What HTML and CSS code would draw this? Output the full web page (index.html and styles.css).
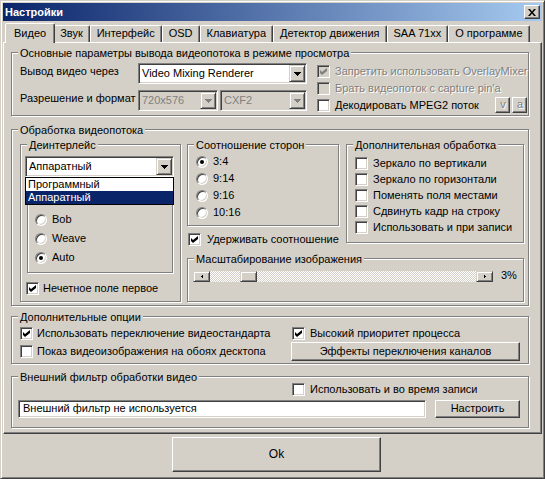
FILE: index.html
```html
<!DOCTYPE html>
<html>
<head>
<meta charset="utf-8">
<title>Настройки</title>
<link rel="stylesheet" href="styles.css">
</head>
<body>
<div class="window">
  <div class="titlebar">
    <span class="title">Настройки</span>
    <span class="close"><svg width="8" height="7" viewBox="0 0 8 7"><path d="M0 0h2l2 2.5L6 0h2L5 3.5 8 7H6L4 4.5 2 7H0l3-3.5z" fill="#000"/></svg></span>
  </div>
  <div class="tabs">
    <div class="tab active">Видео</div>
    <div class="tab">Звук</div>
    <div class="tab">Интерфейс</div>
    <div class="tab">OSD</div>
    <div class="tab">Клавиатура</div>
    <div class="tab">Детектор движения</div>
    <div class="tab">SAA 71xx</div>
    <div class="tab">О программе</div>
  </div>
  <div class="panel">
    <div class="group g1">
      <div class="legend">Основные параметры вывода видеопотока в режиме просмотра</div>
      <div class="g1-body">
        <div class="g1-left">
          <div class="frow">
            <span class="flabel">Вывод видео через</span>
            <div class="combo c-vmr"><span class="ctext">Video Mixing Renderer</span><span class="dd"><svg width="7" height="4" viewBox="0 0 7 4"><path d="M0 0h7v1h-1v1h-1v1h-1v1h-1v-1h-1v-1h-1v-1h-1z" fill="#000"/></svg></span></div>
          </div>
          <div class="frow">
            <span class="flabel">Разрешение и формат</span>
            <div class="combo disabled c-res"><span class="ctext">720x576</span><span class="dd"><svg width="7" height="4" viewBox="0 0 7 4"><path d="M0 0h7v1h-1v1h-1v1h-1v1h-1v-1h-1v-1h-1v-1h-1z" fill="#808080"/></svg></span></div>
            <div class="combo disabled c-fmt"><span class="ctext">CXF2</span><span class="dd"><svg width="7" height="4" viewBox="0 0 7 4"><path d="M0 0h7v1h-1v1h-1v1h-1v1h-1v-1h-1v-1h-1v-1h-1z" fill="#808080"/></svg></span></div>
          </div>
        </div>
        <div class="g1-right">
          <div class="check disabled r17"><span class="box"><svg width="7" height="7" viewBox="0 0 7 7"><path d="M0 2l2 2 5-4v3l-5 4-2-2z" fill="#808080"/></svg></span><span class="clabel">Запретить использовать OverlayMixer</span></div>
          <div class="check disabled r17"><span class="box"></span><span class="clabel">Брать видеопоток с capture pin'a</span></div>
          <div class="check r17"><span class="box"></span><span class="clabel">Декодировать MPEG2 поток</span><span class="spacer"></span><span class="mini">v</span><span class="mini">a</span></div>
        </div>
      </div>
    </div>

    <div class="group g2">
      <div class="legend">Обработка видеопотока</div>
      <div class="g2-body">
        <div class="group deint">
          <div class="legend">Деинтерлейс</div>
          <div class="deint-body">
            <div class="combo c-deint"><span class="ctext">Аппаратный</span><span class="dd"><svg width="7" height="4" viewBox="0 0 7 4"><path d="M0 0h7v1h-1v1h-1v1h-1v1h-1v-1h-1v-1h-1v-1h-1z" fill="#000"/></svg></span></div>
            <div class="group radiobox">
              <div class="radio r19"><span class="rb"></span><span class="rlabel">Bob</span></div>
              <div class="radio r19"><span class="rb"></span><span class="rlabel">Weave</span></div>
              <div class="radio r19"><span class="rb on"></span><span class="rlabel">Auto</span></div>
            </div>
            <div class="check r17 odd"><span class="box"><svg width="7" height="7" viewBox="0 0 7 7"><path d="M0 2l2 2 5-4v3l-5 4-2-2z" fill="#000"/></svg></span><span class="clabel">Нечетное поле первое</span></div>
            <div class="dropdown">
              <div class="opt">Программный</div>
              <div class="opt sel">Аппаратный</div>
            </div>
          </div>
        </div>
        <div class="g2-right">
          <div class="g2-top">
            <div class="aspect-col">
              <div class="group aspect">
                <div class="legend">Соотношение сторон</div>
                <div class="aspect-body">
                  <div class="radio r17"><span class="rb on"></span><span class="rlabel">3:4</span></div>
                  <div class="radio r17"><span class="rb"></span><span class="rlabel">9:14</span></div>
                  <div class="radio r17"><span class="rb"></span><span class="rlabel">9:16</span></div>
                  <div class="radio r17"><span class="rb"></span><span class="rlabel">10:16</span></div>
                </div>
              </div>
              <div class="check r17 keep"><span class="box"><svg width="7" height="7" viewBox="0 0 7 7"><path d="M0 2l2 2 5-4v3l-5 4-2-2z" fill="#000"/></svg></span><span class="clabel">Удерживать соотношение</span></div>
            </div>
            <div class="group extra">
              <div class="legend">Дополнительная обработка</div>
              <div class="extra-body">
                <div class="check r15"><span class="box"></span><span class="clabel">Зеркало по вертикали</span></div>
                <div class="check r15"><span class="box"></span><span class="clabel">Зеркало по горизонтали</span></div>
                <div class="check r15"><span class="box"></span><span class="clabel">Поменять поля местами</span></div>
                <div class="check r15"><span class="box"></span><span class="clabel">Сдвинуть кадр на строку</span></div>
                <div class="check r15"><span class="box"></span><span class="clabel">Использовать и при записи</span></div>
              </div>
            </div>
          </div>
          <div class="group scale">
            <div class="legend">Масштабирование изображения</div>
            <div class="scale-body">
              <div class="scrollbar">
                <span class="sbtn"><svg width="2" height="3" viewBox="0 0 2 3"><path d="M2 0v3H1V2H0V1h1V0z" fill="#000"/></svg></span>
                <span class="track"><span class="thumb"></span></span>
                <span class="sbtn"><svg width="2" height="3" viewBox="0 0 2 3"><path d="M0 0v3h1V2h1V1H1V0z" fill="#000"/></svg></span>
              </div>
              <span class="pct">3%</span>
            </div>
          </div>
        </div>
      </div>
    </div>

    <div class="group g3">
      <div class="legend">Дополнительные опции</div>
      <div class="g3-body">
        <div class="g3-left">
          <div class="check r17"><span class="box"><svg width="7" height="7" viewBox="0 0 7 7"><path d="M0 2l2 2 5-4v3l-5 4-2-2z" fill="#000"/></svg></span><span class="clabel">Использовать переключение видеостандарта</span></div>
          <div class="check r17"><span class="box"></span><span class="clabel">Показ видеоизображения на обоях десктопа</span></div>
        </div>
        <div class="g3-right">
          <div class="check r17 shift"><span class="box"><svg width="7" height="7" viewBox="0 0 7 7"><path d="M0 2l2 2 5-4v3l-5 4-2-2z" fill="#000"/></svg></span><span class="clabel">Высокий приоритет процесса</span></div>
          <div class="btn effects">Эффекты переключения каналов</div>
        </div>
      </div>
    </div>

    <div class="group g4">
      <div class="legend">Внешний фильтр обработки видео</div>
      <div class="check r15 g4-check"><span class="box"></span><span class="clabel">Использовать и во время записи</span></div>
      <div class="g4-row">
        <div class="field">Внешний фильтр не используется</div>
        <div class="btn setup">Настроить</div>
      </div>
    </div>
  </div>
  <div class="okrow">
    <div class="btn ok">Ok</div>
  </div>
</div>
</body>
</html>
```

FILE: styles.css
```css
* { box-sizing: border-box; }
html, body { margin: 0; padding: 0; }
body {
  width: 545px;
  height: 479px;
  overflow: hidden;
  background: #d4d0c8;
  font-family: "Liberation Sans", Arial, sans-serif;
  font-size: 11px;
  line-height: 13px;
  color: #000;
}
.window {
  width: 545px;
  height: 479px;
  padding: 2px;
  background: #d4d0c8;
  border: 1px solid;
  border-color: #d4d0c8 #404040 #404040 #d4d0c8;
  box-shadow: inset 1px 1px #fff, inset -1px -1px #808080;
}
.titlebar {
  height: 18px;
  display: flex;
  justify-content: space-between;
  align-items: flex-start;
  background: linear-gradient(to right, #0a246a, #a6caf0);
}
.title {
  color: #fff;
  font-weight: bold;
  line-height: 18px;
  padding-left: 2px;
}
.close {
  width: 16px;
  height: 14px;
  margin: 2px 2px 0 0;
  display: flex;
  align-items: center;
  justify-content: center;
  background: #d4d0c8;
  border: 1px solid;
  border-color: #fff #404040 #404040 #fff;
  box-shadow: inset -1px -1px #808080;
}

/* tabs */
.tabs {
  height: 21px;
  display: flex;
  align-items: flex-end;
  padding-left: 4px;
}
.tab {
  height: 17px;
  padding: 0 6px;
  line-height: 15px;
  white-space: nowrap;
  border: 1px solid;
  border-bottom: 0;
  border-color: #fff #404040 #404040 #fff;
  border-radius: 2px 2px 0 0;
  box-shadow: inset -1px 0 #808080;
  background: #d4d0c8;
}
.tab.active {
  height: 20px;
  margin: 0 -2px -1px;
  padding: 2px 8px 0;
  position: relative;
  z-index: 2;
}

/* panel */
.panel {
  height: 392px;
  padding: 9px 0 0 7px;
  border: 1px solid;
  border-color: #fff #404040 #404040 #fff;
  box-shadow: inset -1px -1px #808080;
}

/* group boxes */
.group {
  border: 1px solid #808080;
  box-shadow: inset 1px 1px #fff, 1px 1px #fff;
}
.legend {
  width: fit-content;
  height: 13px;
  margin: -6px 0 0 6px;
  padding: 0 2px;
  background: #d4d0c8;
  white-space: nowrap;
}
.g1 { width: 518px; height: 64px; }
.g2 { width: 518px; height: 177px; margin-top: 13px; }
.g3 { width: 518px; height: 48px; margin-top: 10px; }
.g4 { width: 518px; height: 52px; margin-top: 12px; }

/* group 1 */
.g1-body {
  display: flex;
  margin-top: 3px;
  padding: 0 8px;
}
.g1-left { width: 287px; }
.frow { display: flex; height: 21px; }
.frow + .frow { margin-top: 6px; }
.flabel { width: 118px; margin-top: 2px; white-space: nowrap; }
.g1-right { flex: 1; margin-left: 10px; }

/* combo */
.combo {
  display: flex;
  height: 21px;
  padding: 1px;
  background: #fff;
  border: 1px solid;
  border-color: #808080 #fff #fff #808080;
  box-shadow: inset 1px 1px #404040, inset -1px -1px #d4d0c8;
}
.combo.disabled { background: #d4d0c8; color: #808080; }
.ctext {
  flex: 1;
  padding-left: 2px;
  line-height: 16px;
  white-space: nowrap;
  overflow: hidden;
}
.dd {
  width: 16px;
  height: 17px;
  flex: none;
  display: flex;
  align-items: center;
  justify-content: center;
  background: #d4d0c8;
  border: 1px solid;
  border-color: #d4d0c8 #404040 #404040 #d4d0c8;
  box-shadow: inset 1px 1px #fff, inset -1px -1px #808080;
}
.c-vmr { width: 169px; }
.c-res { width: 80px; }
.c-fmt { width: 87px; margin-left: 2px; }
.c-deint { width: 149px; }

/* checkboxes */
.check {
  display: flex;
  align-items: center;
  white-space: nowrap;
}
.r17 { height: 17px; }
.r15 { height: 15px; }
.box {
  width: 13px;
  height: 13px;
  flex: none;
  display: flex;
  align-items: center;
  justify-content: center;
  background: #fff;
  border: 1px solid;
  border-color: #808080 #fff #fff #808080;
  box-shadow: inset 1px 1px #404040, inset -1px -1px #d4d0c8;
}
.clabel { margin-left: 5px; }
.disabled { color: #808080; }
.check.disabled .clabel { text-shadow: 1px 1px #fff; }
.check.disabled .box { background: #d4d0c8; }
.spacer { flex: 1; }
.mini {
  width: 15px;
  height: 16px;
  align-self: flex-start;
  margin-left: 2px;
  text-align: center;
  line-height: 13px;
  color: #808080;
  text-shadow: 1px 1px #fff;
  border: 1px solid;
  border-color: #fff #404040 #404040 #fff;
  box-shadow: inset -1px -1px #808080;
}

/* radios */
.radio {
  display: flex;
  align-items: flex-start;
  white-space: nowrap;
}
.r19 { height: 19px; }
.rb {
  width: 12px;
  height: 12px;
  margin-top: 2px;
  flex: none;
  display: flex;
  align-items: center;
  justify-content: center;
  border-radius: 50%;
  background: #fff;
  border: 1px solid;
  border-color: #808080 #fff #fff #808080;
  box-shadow: inset 1px 1px #404040, inset -1px -1px #d4d0c8;
}
.rb.on::after {
  content: "";
  width: 4px;
  height: 4px;
  border-radius: 50%;
  background: #000;
}
.rlabel { margin: 1px 0 0 5px; }

/* group 2 */
.g2-body {
  display: flex;
  margin-top: 7px;
  padding-left: 8px;
}
.deint { width: 161px; height: 158px; }
.deint-body {
  position: relative;
  margin-top: 4px;
  padding-left: 4px;
}
.radiobox {
  width: 146px;
  height: 87px;
  margin: 9px 0 0 2px;
  padding: 25px 0 0 7px;
}
.odd { margin: 7px 0 0 1px; }
.odd .clabel { margin-left: 4px; }
.dropdown {
  position: absolute;
  left: 4px;
  top: 21px;
  width: 149px;
  background: #fff;
  border: 1px solid #000;
}
.opt {
  height: 13px;
  line-height: 13px;
  padding-left: 2px;
  white-space: nowrap;
}
.opt.sel { background: #0a246a; color: #fff; }

.g2-right { width: 337px; margin-left: 6px; }
.g2-top { display: flex; height: 99px; }
.aspect-col { width: 152px; }
.aspect { height: 82px; }
.aspect-body { margin-top: 2px; padding-left: 8px; }
.keep { margin: 5px 0 0 1px; }
.keep .clabel { margin-left: 6px; }
.extra { width: 178px; height: 99px; margin-left: 7px; }
.extra-body {
  display: flex;
  flex-direction: column;
  gap: 1px;
  margin-top: 4px;
  padding-left: 8px;
}
.scale { height: 44px; margin-top: 15px; }
.scale-body {
  display: flex;
  align-items: flex-start;
  margin-top: 5px;
  padding-left: 5px;
}
.scrollbar { display: flex; width: 300px; height: 11px; }
.sbtn {
  width: 17px;
  height: 11px;
  flex: none;
  display: flex;
  align-items: center;
  justify-content: center;
  background: #d4d0c8;
  border: 1px solid;
  border-color: #d4d0c8 #404040 #404040 #d4d0c8;
  box-shadow: inset 1px 1px #fff, inset -1px -1px #808080;
}
.track {
  flex: 1;
  display: flex;
  background-color: #d4d0c8;
  background-image: repeating-conic-gradient(#fff 0 25%, #d4d0c8 0 50%);
  background-size: 2px 2px;
}
.thumb {
  width: 17px;
  height: 11px;
  margin-left: 30px;
  background: #d4d0c8;
  border: 1px solid;
  border-color: #d4d0c8 #404040 #404040 #d4d0c8;
  box-shadow: inset 1px 1px #fff, inset -1px -1px #808080;
}
.pct { margin: -2px 0 0 8px; }

/* buttons */
.btn {
  text-align: center;
  white-space: nowrap;
  background: #d4d0c8;
  border: 1px solid;
  border-color: #fff #404040 #404040 #fff;
  box-shadow: inset -1px -1px #808080;
}

/* group 3 */
.g3-body {
  display: flex;
  margin-top: 1px;
  padding-left: 8px;
}
.g3-left {
  width: 271px;
  display: flex;
  flex-direction: column;
  gap: 1px;
}
.g3-left .clabel { margin-left: 4px; }
.g3-right { width: 229px; }
.shift { padding-left: 1px; }
.effects { height: 19px; line-height: 16px; }

/* group 4 */
.g4 .legend { margin-bottom: -2px; }
.g4-check { margin-left: 280px; }
.g4-row {
  display: flex;
  margin-top: 3px;
  padding-left: 6px;
}
.field {
  width: 408px;
  height: 18px;
  padding-left: 4px;
  line-height: 14px;
  background: #fff;
  white-space: nowrap;
  border: 1px solid;
  border-color: #808080 #fff #fff #808080;
  box-shadow: inset 1px 1px #404040, inset -1px -1px #d4d0c8;
}
.setup { width: 85px; height: 18px; margin-left: 9px; line-height: 15px; }

/* ok */
.okrow { padding: 3px 0 0 169px; }
.ok {
  width: 209px;
  height: 35px;
  line-height: 32px;
  font-size: 12px;
}
```
